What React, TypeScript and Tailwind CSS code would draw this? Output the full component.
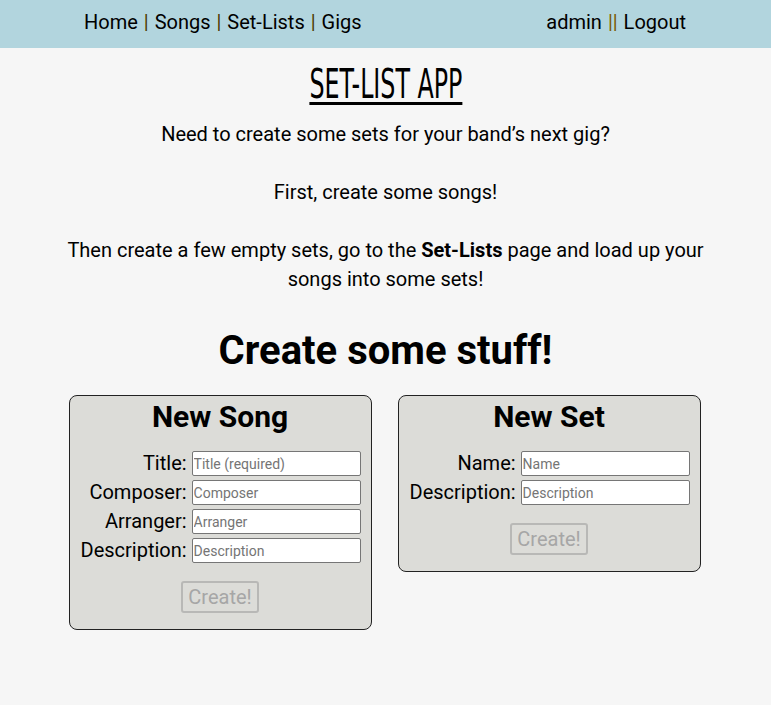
import { useState } from "react";

const Sep = ({ text, dark }: { text: string; dark?: boolean }) => (
  <span className={dark ? "text-[#4a3800]" : "text-[#7a5a00]"}>{text}</span>
);

const Field = ({ label, placeholder }: { label: string; placeholder: string }) => (
  <>
    <label className="text-right text-[20px] leading-[25px] text-black">{label}</label>
    <input
      type="text"
      placeholder={placeholder}
      className="h-[25px] w-full rounded-[2px] border border-[#767676] bg-white px-[1px] text-[14px] text-black placeholder:text-[#757575] outline-none"
    />
  </>
);

const Card = ({ title, fields }: { title: string; fields: [string, string][] }) => {
  const [busy] = useState(true);
  return (
    <div className="w-[303px] rounded-[8px] border border-[#222] bg-[#dcdcd8] px-[11px] pt-[4px] pb-[16px]">
      <h2 className="text-center text-[30px] font-bold leading-[34px]">{title}</h2>
      <div className="mt-[17px] grid grid-cols-[auto_169px] gap-x-[5px] gap-y-[4px]">
        {fields.map(([l, p]) => (
          <Field key={l} label={l} placeholder={p} />
        ))}
      </div>
      <div className="mt-[18px] flex justify-center">
        <button
          disabled={busy}
          className="h-[32px] rounded-[3px] border-2 border-[#b8b8b6] bg-[#dcdcd8] px-[5px] text-[20px] leading-none text-[#a6a6a6]"
        >
          Create!
        </button>
      </div>
    </div>
  );
};

const App = () => {
  return (
    <div className="min-h-[705px] bg-[#f6f6f6] text-black" style={{ fontFamily: "Roboto, 'Liberation Sans', sans-serif" }}>
      <nav className="flex h-[48px] items-center justify-between bg-[#b2d5de] pb-[4px] pl-[84px] pr-[85px] text-[20px] [word-spacing:1px]">
        <div>
          Home <Sep text="|" dark /> Songs <Sep text="|" dark /> Set-Lists <Sep text="|" dark /> Gigs
        </div>
        <div>
          admin <Sep text="||" /> Logout
        </div>
      </nav>
      <div className="flex flex-col items-center">
        <h1
          className="mt-[14px] scale-x-[0.66] text-[40px] leading-[44px] underline decoration-[3px] underline-offset-[4px]"
          style={{ fontFamily: "'Liberation Sans Narrow', 'DejaVu Sans Condensed', sans-serif" }}
        >
          SET-LIST APP
        </h1>
        <p className="mt-[14px] w-[670px] text-center text-[20px] leading-[29px]">
          Need to create some sets for your band’s next gig?
          <br />
          <br />
          First, create some songs!
          <br />
          <br />
          Then create a few empty sets, go to the <b>Set-Lists</b> page and load up your songs into some sets!
        </p>
        <h2 className="mt-[33px] text-[40px] font-bold leading-[48px]">Create some stuff!</h2>
        <div className="mt-[20px] flex items-start gap-[26px] pr-[2px]">
          <Card
            title="New Song"
            fields={[
              ["Title:", "Title (required)"],
              ["Composer:", "Composer"],
              ["Arranger:", "Arranger"],
              ["Description:", "Description"],
            ]}
          />
          <Card
            title="New Set"
            fields={[
              ["Name:", "Name"],
              ["Description:", "Description"],
            ]}
          />
        </div>
      </div>
    </div>
  );
};

export default App;
